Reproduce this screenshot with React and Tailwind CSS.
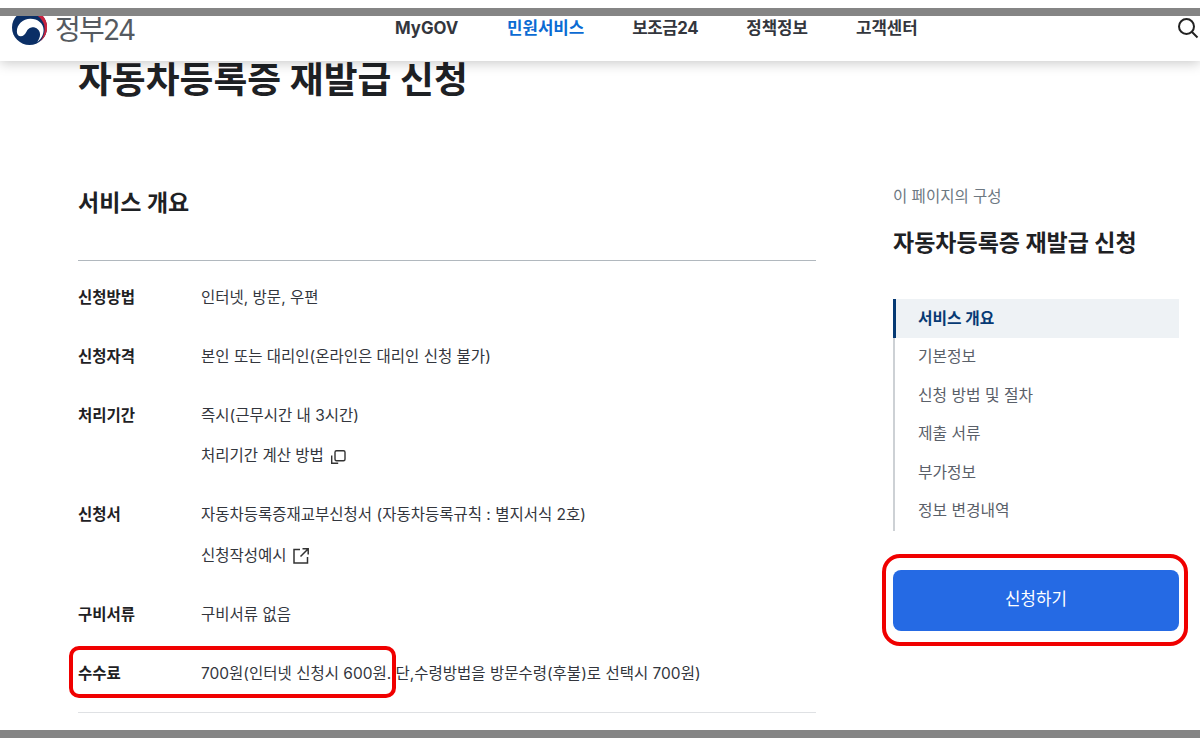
import React from "react";

const font = { fontFamily: '"Inter", "Noto Sans CJK KR", "Noto Sans", sans-serif' };

function Logo() {
  return (
    <svg width="35" height="35" viewBox="0 0 36 36" className="shrink-0">
      <circle cx="18" cy="18" r="18" fill="#0b2f66" />
      <path d="M15 .2A18 18 0 0 1 29 32.300C33 27 34.500 21 33 15 31 8 24 3 15 .2Z" fill="#c8243f" />
      <path d="M5 22C5 15 11 9 19 9 26.500 9 32.500 14 32.500 20.500 32.500 26 29.500 30 26 33 28.500 29 29.500 26 28.500 23 27.500 19.500 23.500 17 20 18 17.500 18.500 16 20 15 22 13.500 25 11.500 27 9 27 6.500 27 5 25 5 22Z" fill="#ffffff" />
    </svg>
  );
}

function CopyIcon() {
  return (
    <svg width="18" height="18" viewBox="0 0 18 18" fill="none" stroke="#333" strokeWidth="1.400" className="ml-[5px] mt-[1px]">
      <rect x="6" y="2.700" width="10" height="10" rx="1.500" />
      <path d="M2.700 7.500v7.800h6.500" />
    </svg>
  );
}

function ExternalIcon() {
  return (
    <svg width="18" height="18" viewBox="0 0 18 18" fill="none" stroke="#333" strokeWidth="1.500" className="ml-[5px]">
      <path d="M8 2.500H2v13.500h13.500V10" />
      <path d="M8.500 9.500L16 2M10.500 1.800h5.700v5.700" />
    </svg>
  );
}

function Row({ label, children, className = "" }) {
  return (
    <div className={`flex ${className}`}>
      <div className="w-[123px] shrink-0 text-[15.500px] leading-[20px] font-bold text-[#1e2124]">{label}</div>
      <div className="flex flex-col gap-[20px] text-[15.500px] leading-[20px] text-[#33363d]">{children}</div>
    </div>
  );
}

export default function App() {
  return (
    <div style={font} className="relative h-[746px] w-[1200px] overflow-hidden bg-white">
      <div className="relative z-10 bg-white pt-[8px] shadow-[0_2px_12px_rgba(0,0,0,0.22)]">
        <div className="relative z-10 h-[8px] bg-[#858585]" />
        <header className="flex h-[45px] items-start overflow-visible">
          <div className="-mt-[6px] ml-[12px] flex w-[383px] items-start">
            <Logo />
            <span className="ml-[8px] mt-[2px] text-[28px] leading-[36px] font-normal tracking-[-1.700px] text-[#555a60]">정부24</span>
          </div>
          <nav className="flex items-center gap-[48px] text-[16.800px] leading-[24px] font-bold text-[#33363d]">
            <span className="w-[64px]">MyGOV</span>
            <span className="text-[#0b6bd3]">민원서비스</span>
            <span className="tracking-[-0.400px]">보조금24</span>
            <span>정책정보</span>
            <span>고객센터</span>
          </nav>
          <svg width="24" height="24" viewBox="0 0 24 24" fill="none" stroke="#222" strokeWidth="2" className="ml-auto">
            <circle cx="10.500" cy="10.500" r="7.500" />
            <path d="M16 16l5.500 5.500" />
          </svg>
        </header>
      </div>

      <main className="px-[78px]">
        <h1 className="mt-[1px] text-[36.800px] leading-[36px] font-bold text-[#1e2124]">자동차등록증 재발급 신청</h1>
        <div className="flex">
          <section className="w-[738px] shrink-0">
            <h2 className="mt-[88px] text-[23px] leading-[34px] font-bold text-[#1e2124]">서비스 개요</h2>
            <div className="mt-[40px] flex flex-col border-t border-[#b1b8be] pt-[27px]">
              <Row label="신청방법"><span>인터넷, 방문, 우편</span></Row>
              <Row label="신청자격" className="mt-[39px]"><span>본인 또는 대리인(온라인은 대리인 신청 불가)</span></Row>
              <Row label="처리기간" className="mt-[39px]">
                <span>즉시(근무시간 내 3시간)</span>
                <span className="flex items-center">처리기간 계산 방법<CopyIcon /></span>
              </Row>
              <Row label="신청서" className="mt-[39px]">
                <span>자동차등록증재교부신청서 (자동차등록규칙 : 별지서식 2호)</span>
                <span className="mt-[1px] flex items-center">신청작성예시<ExternalIcon /></span>
              </Row>
              <Row label="구비서류" className="mt-[39px]"><span>구비서류 없음</span></Row>
              <Row label="수수료" className="mt-[39px]"><span>700원(인터넷 신청시 600원. 단,수령방법을 방문수령(후불)로 선택시 700원)</span></Row>
            </div>
            <div className="mt-[28px] border-t border-[#dfe1e4]" />
          </section>

          <aside className="ml-[77px] w-[286px] shrink-0">
            <p className="mt-[89px] text-[15.500px] leading-[20px] text-[#6d7882]">이 페이지의 구성</p>
            <h3 className="mt-[20px] text-[23px] leading-[32px] font-bold text-[#1e2124]">자동차등록증 재발급 신청</h3>
            <ul className="mt-[40px] flex flex-col border-l-2 border-[#cdd1d5] text-[15.800px] text-[#5a6069]">
              <li className="-ml-[2px] flex h-[39px] items-center border-l-[3px] border-[#063a74] bg-[#eef2f5] pl-[22px] font-bold text-[#063a74]">서비스 개요</li>
              <li className="flex h-[38.500px] items-center pl-[23px]">기본정보</li>
              <li className="flex h-[38.500px] items-center pl-[23px]">신청 방법 및 절차</li>
              <li className="flex h-[38.500px] items-center pl-[23px]">제출 서류</li>
              <li className="flex h-[38.500px] items-center pl-[23px]">부가정보</li>
              <li className="flex h-[38.500px] items-center pl-[23px]">정보 변경내역</li>
            </ul>
            <button className="mt-[39px] flex h-[61px] w-full items-center justify-center rounded-[8px] bg-[#256ae4] text-[16.800px] text-white">신청하기</button>
          </aside>
        </div>
      </main>

      <div className="absolute left-0 top-[730px] h-[8px] w-full bg-[#858585]" />
      <div className="absolute left-[69px] top-[646px] h-[52px] w-[327px] rounded-[10px] border-[4px] border-[#f00000]" />
      <div className="absolute left-[882px] top-[554px] h-[92px] w-[306px] rounded-[18px] border-[4px] border-[#f00000]" />
    </div>
  );
}
